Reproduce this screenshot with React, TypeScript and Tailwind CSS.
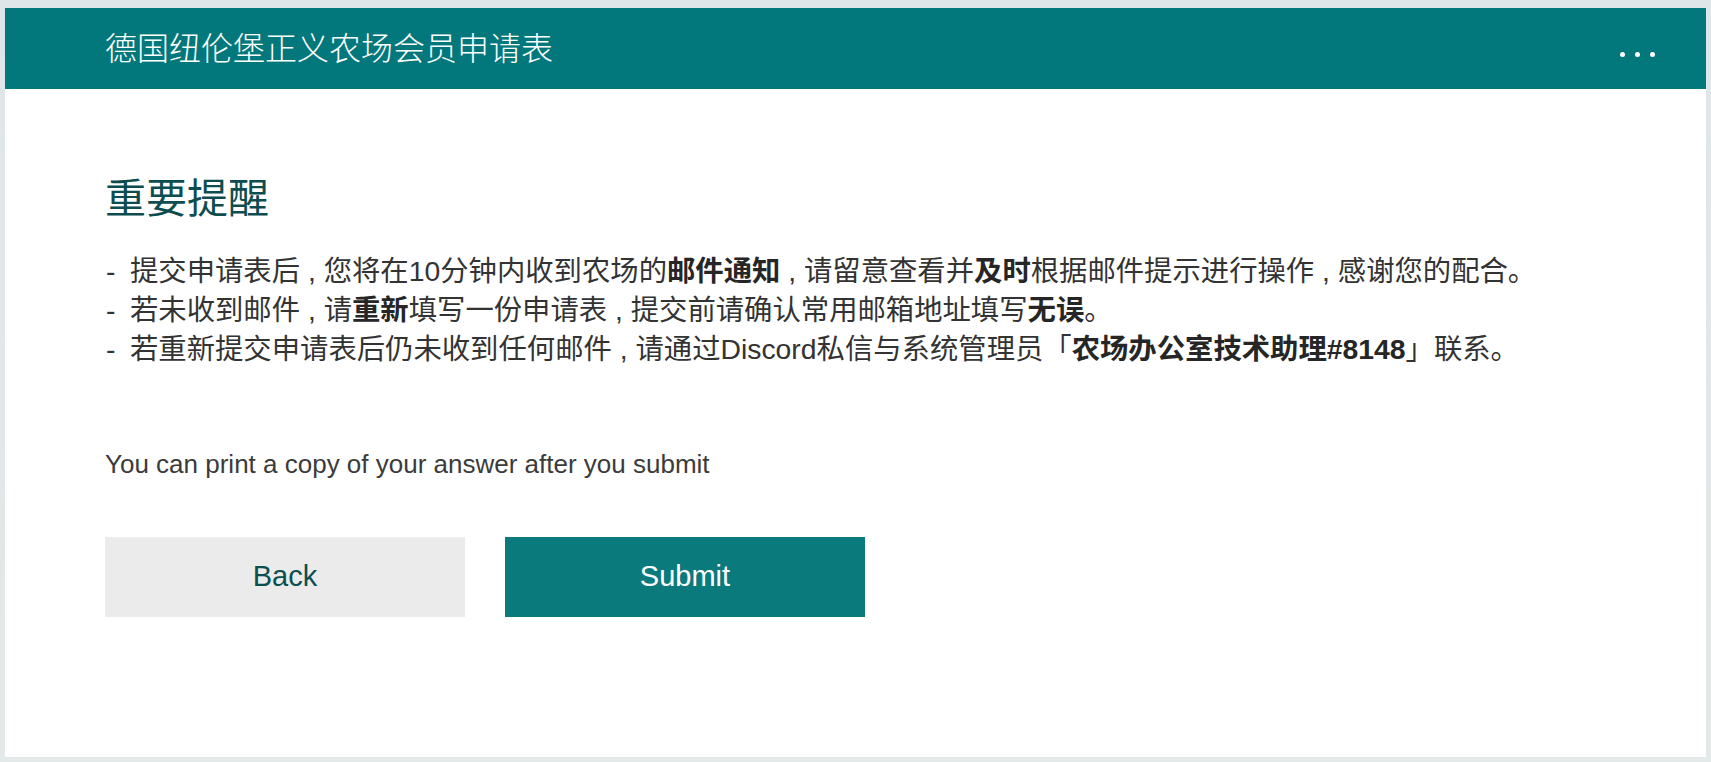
import React from "react";

const FONT = {
  fontFamily: '"Liberation Sans", "Noto Sans CJK SC", sans-serif',
};

function Bullet({ children }: { children: React.ReactNode }) {
  return (
    <div className="flex">
      <span className="w-[25px] shrink-0 pl-[1px]">-</span>
      <span>{children}</span>
    </div>
  );
}

const C = " , ";

export default function App() {
  return (
    <div
      className="min-h-screen bg-gradient-to-b from-[#dfe6e9] to-[#e3e9e8] pt-[8px] px-[5px] pb-[5px]"
      style={FONT}
    >
      <div className="bg-white h-[749px] flex flex-col">
        <header className="h-[81px] bg-[#03787c] flex items-center justify-between pl-[100px] pr-[51px]">
          <h1 className="text-white text-[32px] font-light leading-none">
            德国纽伦堡正义农场会员申请表
          </h1>
          <div className="flex items-center gap-[10px] mt-3">
            <span className="w-[5px] h-[5px] rounded-full bg-white" />
            <span className="w-[5px] h-[5px] rounded-full bg-white" />
            <span className="w-[5px] h-[5px] rounded-full bg-white" />
          </div>
        </header>

        <main className="px-[100px]">
          <h2 className="mt-[82px] text-[41px] leading-[56px] text-[#0d4d4f]">
            重要提醒
          </h2>

          <div className="mt-[25px] text-[28.35px] leading-[39px] text-[#333333]">
            <Bullet>
              提交申请表后{C}您将在10分钟内收到农场的
              <b className="font-bold text-[#262626]">邮件通知</b>
              {C}请留意查看并<b className="font-bold text-[#262626]">及时</b>
              根据邮件提示进行操作{C}感谢您的配合。
            </Bullet>
            <Bullet>
              若未收到邮件{C}请<b className="font-bold text-[#262626]">重新</b>
              填写一份申请表{C}提交前请确认常用邮箱地址填写
              <b className="font-bold text-[#262626]">无误</b>。
            </Bullet>
            <Bullet>
              若重新提交申请表后仍未收到任何邮件{C}请通过Discord私信与系统管理员「
              <b className="font-bold text-[#262626]">农场办公室技术助理#8148</b>
              」联系。
            </Bullet>
          </div>

          <p className="mt-[78px] text-[26px] leading-[34px] text-[#3b3b3b]">
            You can print a copy of your answer after you submit
          </p>

          <div className="mt-[56px] flex gap-[40px]">
            <button className="w-[360px] h-[80px] bg-[#eaebea] text-[#0c4f50] text-[29px]">
              Back
            </button>
            <button className="w-[360px] h-[80px] bg-[#0b7a7c] text-white text-[29px]">
              Submit
            </button>
          </div>
        </main>
      </div>
    </div>
  );
}
